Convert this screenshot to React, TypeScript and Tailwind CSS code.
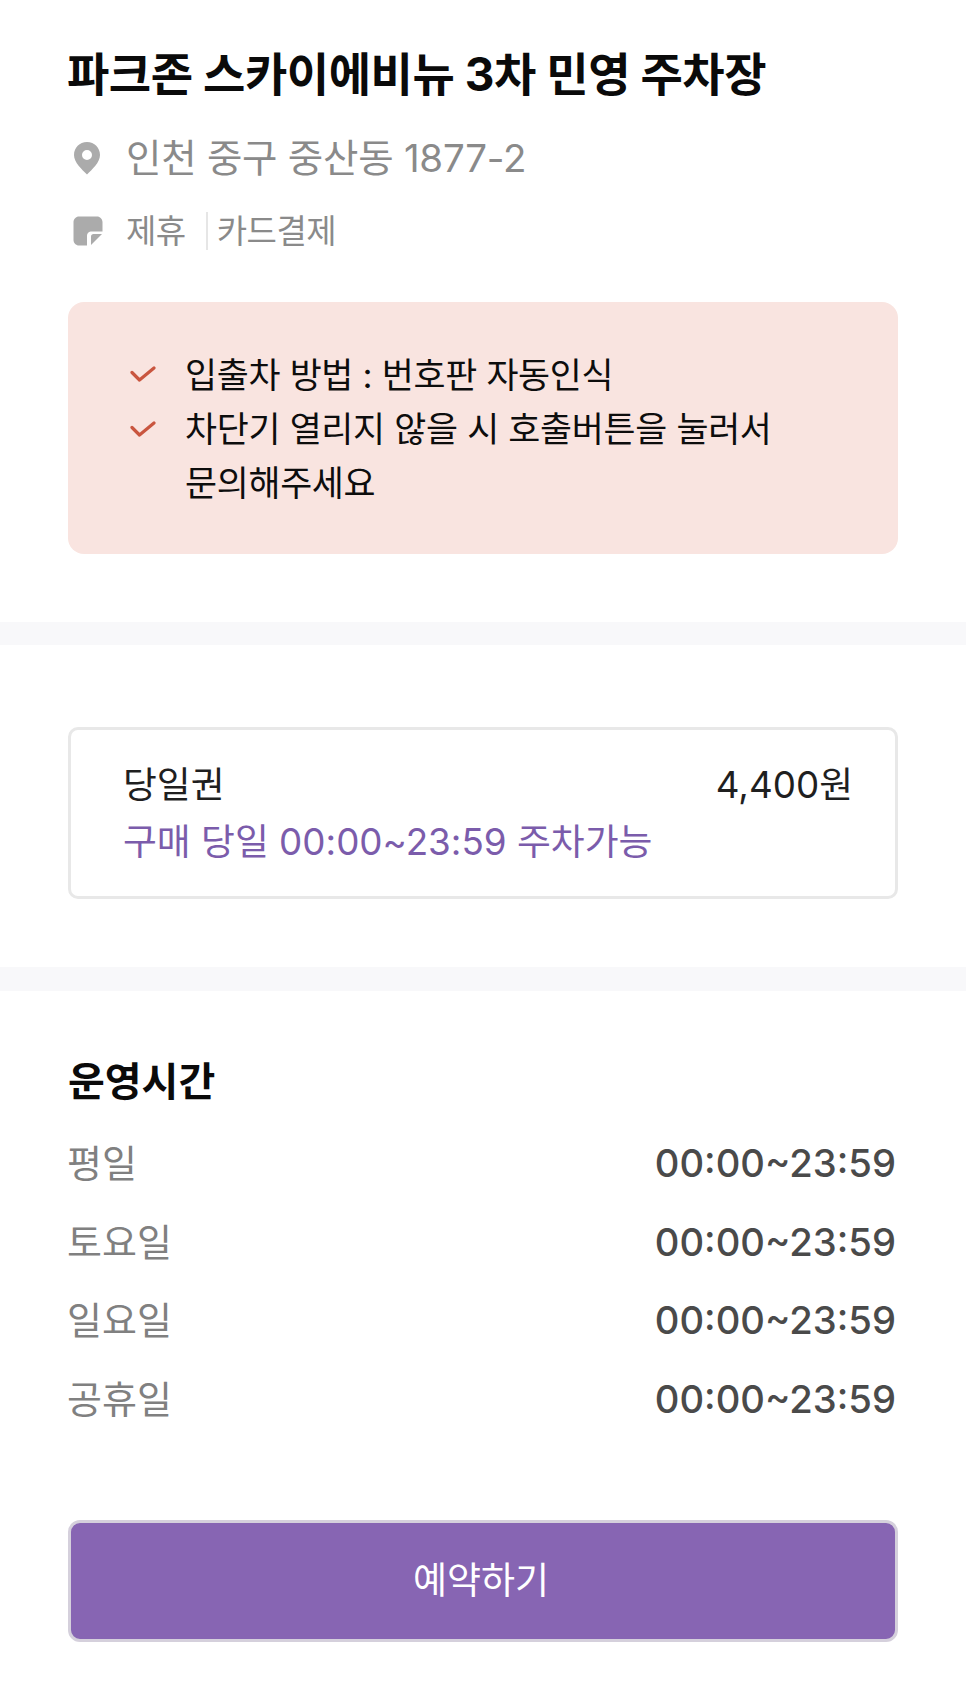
import React from "react";

const font = { fontFamily: '"Inter", "Noto Sans CJK KR", sans-serif' };

function Check() {
  return (
    <svg width="26" height="18" viewBox="0 0 26 18" fill="none" className="shrink-0">
      <path d="M2 6.5L9.5 14L24 2" stroke="#c9553f" strokeWidth="3.2" strokeLinecap="round" strokeLinejoin="round" />
    </svg>
  );
}

const rows = ["평일", "토요일", "일요일", "공휴일"];

export default function App() {
  return (
    <div className="w-[966px] h-[1705px] bg-white overflow-hidden" style={font}>
      <div className="px-[68px] pt-[46px]">
        <h1 className="-ml-[1px] text-[46px] leading-[56px] font-bold text-[#0a0a0a] tracking-[-0.45px] whitespace-nowrap">파크존 스카이에비뉴 3차 민영 주차장</h1>
        <div className="mt-[34px] flex items-center h-[44px] pl-[5px]">
          <svg width="28" height="34" viewBox="0 0 28 34" className="shrink-0">
            <path fillRule="evenodd" d="M14 1C6.500 1 1 6.800 1 14c0 7.500 8 14.500 13 19.500C19 28.500 27 21.500 27 14 27 6.800 21.500 1 14 1Zm0 8a5 5 0 1 1 0 10 5 5 0 0 1 0-10Z" fill="#ababab" />
          </svg>
          <span className="ml-[25px] text-[38.5px] leading-[44px] text-[#8a8a8a] tracking-[-0.25px]">인천 중구 중산동 1877-2</span>
        </div>
        <div className="mt-[30px] flex items-center h-[42px] pl-[5px]">
          <svg width="30" height="30" viewBox="0 0 30 30" className="shrink-0">
            <path d="M6 0.500H24C27 0.500 29.500 3 29.500 6V15.500H19C15.500 15.500 14 17 14 20.500V29.500H6C3 29.500 0.500 27 0.500 24V6C0.500 3 3 0.500 6 0.500Z" fill="#ababab" />
            <path d="M18 29V20.500C18 19 19 18 20.500 18H29Z" fill="#ababab" />
          </svg>
          <span className="ml-[23px] text-[33px] leading-[42px] text-[#8a8a8a] tracking-[-0.5px]">제휴</span>
          <span className="ml-[20px] w-[2px] h-[38px] bg-[#e6e6e6]" />
          <span className="ml-[9px] text-[33px] leading-[42px] text-[#8a8a8a] tracking-[-0.5px]">카드결제</span>
        </div>
        <div className="mt-[50px] h-[252px] rounded-[16px] bg-[#f9e4e0] pl-[62px] pr-[100px] pt-[46px] text-[34.8px] leading-[54px] text-[#0d0d0d] tracking-[-0.3px]">
          <div className="flex items-center gap-[29px]"><Check /><span>입출차 방법 : 번호판 자동인식</span></div>
          <div className="flex items-start gap-[29px]"><span className="mt-[19px]"><Check /></span><span>차단기 열리지 않을 시 호출버튼을 눌러서 문의해주세요</span></div>
        </div>
      </div>
      <div className="mt-[68px] h-[23px] bg-[#f8f8fa]" />
      <div className="px-[68px] pt-[82px]">
        <div className="h-[172px] rounded-[10px] border-[3px] border-[#e8e8e8] pl-[52px] pr-[42px] pt-[26px] text-[36.8px] leading-[57px]">
          <div className="flex justify-between text-[#1f1f1f]"><span>당일권</span><span>4,400원</span></div>
          <div className="text-[#7b5cab]">구매 당일 00:00~23:59 주차가능</div>
        </div>
      </div>
      <div className="mt-[68px] h-[24px] bg-[#f8f8fa]" />
      <div className="px-[68px] pt-[66px]">
        <h2 className="text-[40px] leading-[50px] font-bold text-[#0a0a0a]">운영시간</h2>
        <div className="mt-[28px] flex flex-col gap-[22.5px]">
          {rows.map((r) => (
            <div key={r} className="flex justify-between text-[38px] leading-[56px]">
              <span className="-ml-[1px] text-[#808080]">{r}</span>
              <span className="mr-[2px] text-[38.2px] font-medium text-[#4a4a4a]">00:00~23:59</span>
            </div>
          ))}
        </div>
        <button className="mt-[93px] w-full h-[122px] rounded-[12px] border-[3px] border-[#d5d0dc] bg-[#8765b3] pr-[4px] text-white text-[37px]">예약하기</button>
      </div>
    </div>
  );
}
